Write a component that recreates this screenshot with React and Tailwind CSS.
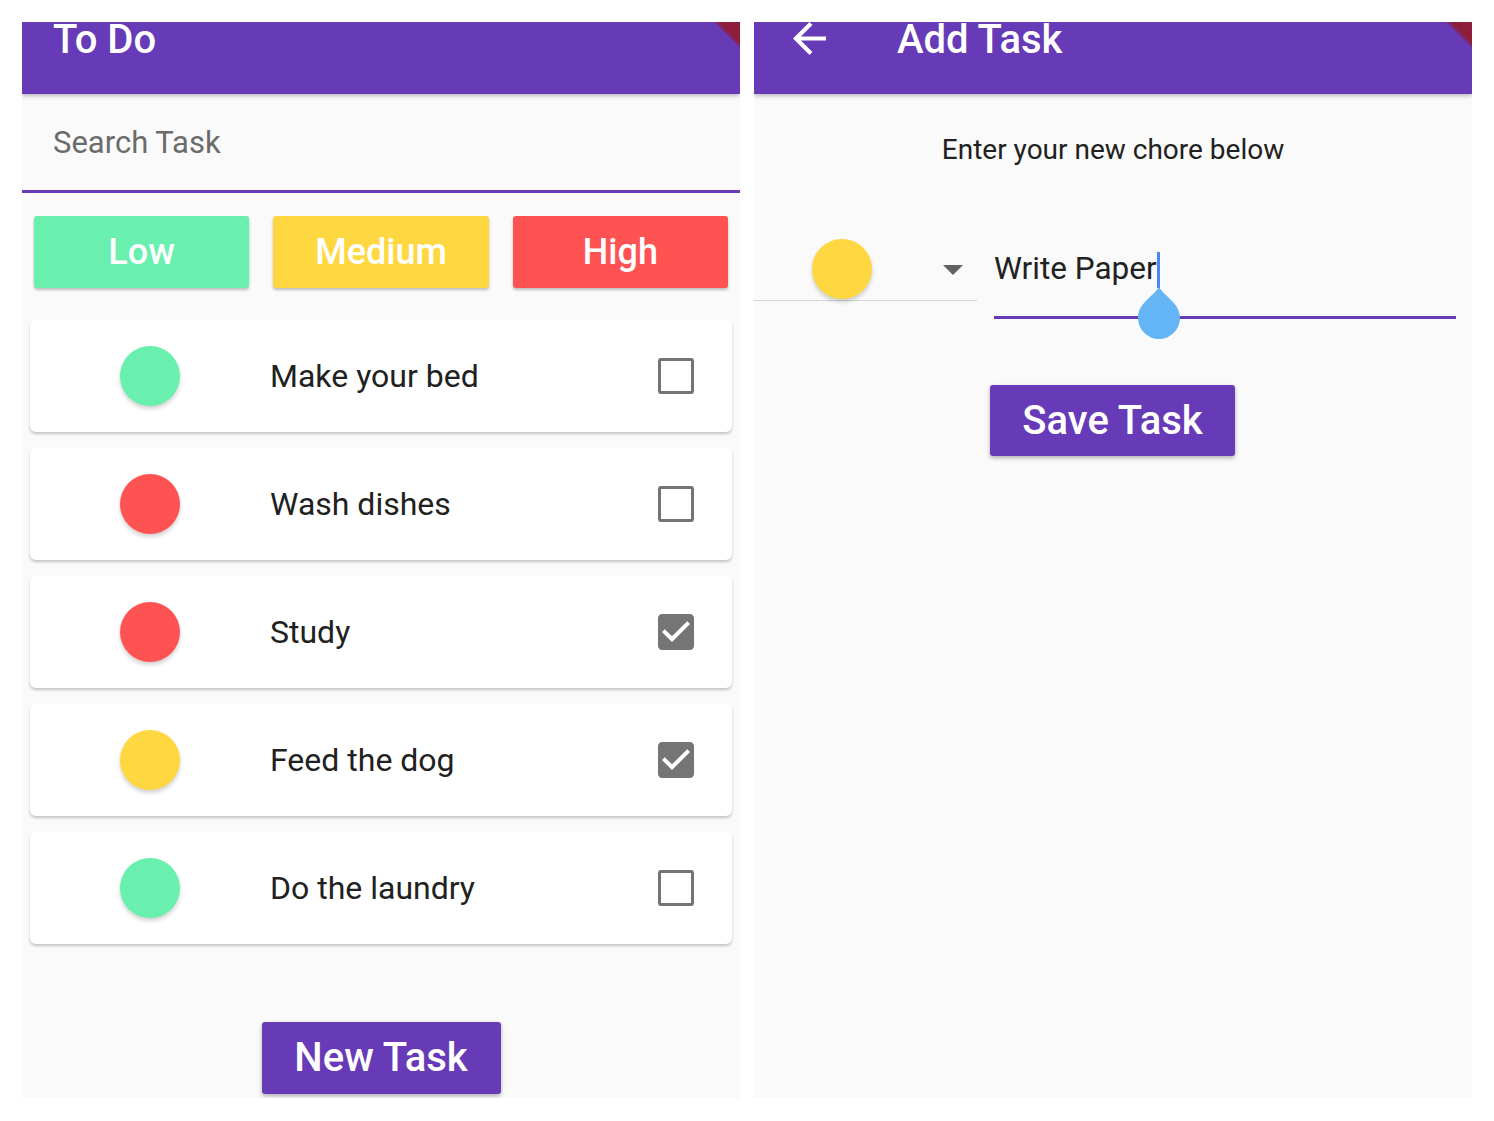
import React from "react";

const tasks = [
  { name: "Make your bed", color: "bg-[#69f0ae]", done: false },
  { name: "Wash dishes", color: "bg-[#ff5252]", done: false },
  { name: "Study", color: "bg-[#ff5252]", done: true },
  { name: "Feed the dog", color: "bg-[#ffd740]", done: true },
  { name: "Do the laundry", color: "bg-[#69f0ae]", done: false },
];

function DebugCorner() {
  return (
    <svg className="absolute top-0 right-0 w-[26px] h-[26px]" viewBox="0 0 26 26">
      <defs>
        <linearGradient id="dbg" x1="0" y1="1" x2="1" y2="0">
          <stop offset="0.45" stopColor="#8e1d3c" stopOpacity="0" />
          <stop offset="0.6" stopColor="#8e1d3c" stopOpacity="1" />
        </linearGradient>
      </defs>
      <polygon points="0,0 26,0 26,26" fill="url(#dbg)" />
    </svg>
  );
}

function Checkbox({ checked }) {
  if (checked) {
    return (
      <svg viewBox="3 3 18 18" className="w-[36px] h-[36px]">
        <path
          d="M19 3H5c-1.11 0-2 .9-2 2v14c0 1.1.89 2 2 2h14c1.11 0 2-.9 2-2V5c0-1.1-.89-2-2-2zm-9 14l-5-5 1.41-1.41L10 14.17l7.59-7.59L19 8l-9 9z"
          fill="#757575"
        />
      </svg>
    );
  }
  return <div className="w-[36px] h-[36px] rounded-[3px] border-[3px] border-[#757575]" />;
}

function TodoScreen() {
  return (
    <div className="relative w-[718px] h-[1076px] bg-[#fafafa] overflow-hidden flex flex-col">
      <div className="relative z-10 h-[72px] shrink-0 bg-[#673ab7] shadow-[0_2px_4px_rgba(0,0,0,0.25)] pl-[31px]">
        <div className="text-white text-[40px] font-medium leading-[40px] -mt-[2px]">To Do</div>
        <DebugCorner />
      </div>
      <div className="h-[99px] shrink-0 border-b-[3px] border-[#673ab7] flex items-center pl-[31px] pt-[3px]">
        <span className="text-[31px] text-[#6b6b6b]">Search Task</span>
      </div>
      <div className="flex gap-6 px-3 mt-[23px]">
        <button className="flex-1 h-[72px] rounded-[3px] bg-[#69f0ae] text-white text-[36px] font-medium shadow-[0_2px_3px_rgba(0,0,0,0.25)]">Low</button>
        <button className="flex-1 h-[72px] rounded-[3px] bg-[#ffd740] text-white text-[36px] font-medium shadow-[0_2px_3px_rgba(0,0,0,0.25)]">Medium</button>
        <button className="flex-1 h-[72px] rounded-[3px] bg-[#ff5252] text-white text-[36px] font-medium shadow-[0_2px_3px_rgba(0,0,0,0.25)]">High</button>
      </div>
      <div className="flex flex-col gap-4 mx-2 mt-8">
        {tasks.map((t) => (
          <div key={t.name} className="h-[112px] bg-white rounded-[6px] shadow-[0_2px_3px_rgba(0,0,0,0.22)] flex items-center">
            <div className={`ml-[90px] w-[60px] h-[60px] rounded-full shadow-[0_3px_4px_rgba(0,0,0,0.18)] ${t.color}`} />
            <div className="ml-[90px] flex-1 text-[32px] text-[#212121]">{t.name}</div>
            <div className="mr-[38px]">
              <Checkbox checked={t.done} />
            </div>
          </div>
        ))}
      </div>
      <div className="flex justify-center mt-[78px]">
        <button className="w-[239px] h-[72px] rounded-[3px] bg-[#673ab7] text-white text-[40px] font-medium shadow-[0_2px_4px_rgba(0,0,0,0.3)]">New Task</button>
      </div>
    </div>
  );
}

function AddTaskScreen() {
  return (
    <div className="relative w-[718px] h-[1076px] bg-[#fafafa] overflow-hidden flex flex-col">
      <div className="relative z-10 h-[72px] shrink-0 bg-[#673ab7] shadow-[0_2px_4px_rgba(0,0,0,0.25)] flex items-start">
        <svg viewBox="4 4 16 16" className="ml-[39px] w-[33px] h-[33px]">
          <path d="M20 11H7.83l5.59-5.59L12 4l-8 8 8 8 1.41-1.41L7.83 13H20v-2z" fill="white" />
        </svg>
        <div className="ml-[71px] text-white text-[40px] font-medium leading-[40px] -mt-[2px]">Add Task</div>
        <DebugCorner />
      </div>
      <div className="h-[112px] shrink-0 flex items-center justify-center">
        <span className="text-[28px] text-[#212121]">Enter your new chore below</span>
      </div>
      <div className="flex items-start mt-[33px]">
        <div className="w-[223px] h-[62px] border-b border-[#d6d6d6] flex items-start">
          <div className="ml-[58px] w-[60px] h-[60px] rounded-full bg-[#ffd740] shadow-[0_3px_4px_rgba(0,0,0,0.18)]" />
          <svg viewBox="0 0 20 10" className="ml-[71px] mt-[26px] w-[20px] h-[10px]">
            <polygon points="0,0 20,0 10,10" fill="#616161" />
          </svg>
        </div>
        <div className="ml-[17px] mr-4 flex-1 h-[80px] border-b-[3px] border-[#673ab7]">
          <span className="relative inline-block text-[31.5px] leading-[60px] text-[#212121]">
            Write Paper
            <span className="absolute left-full top-[13px] w-[3px] h-[36px] bg-[#4a86f5]" />
            <svg viewBox="0 0 44 53" className="absolute top-[48px] left-[calc(100%-20px)] w-[44px] h-[53px]">
              <path d="M22 0 C28 10 43 16 43 31 A21 21 0 0 1 1 31 C1 16 16 10 22 0 Z" fill="#64b5f6" />
            </svg>
          </span>
        </div>
      </div>
      <div className="mt-[66px] ml-[236px]">
        <button className="w-[245px] h-[71px] rounded-[3px] bg-[#673ab7] text-white text-[40px] font-medium shadow-[0_2px_4px_rgba(0,0,0,0.3)]">Save Task</button>
      </div>
    </div>
  );
}

export default function App() {
  return (
    <div className="w-[1494px] h-[1121px] bg-white flex gap-[14px] pt-[22px] pl-[22px]" style={{ fontFamily: "Roboto, 'Noto Sans', sans-serif" }}>
      <TodoScreen />
      <AddTaskScreen />
    </div>
  );
}
